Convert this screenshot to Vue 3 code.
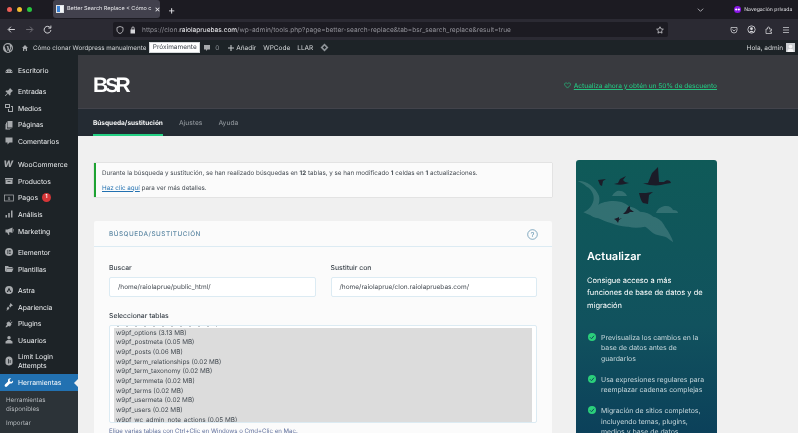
<script setup>
const menuGroups = [
  [{ label: 'Escritorio', icon: 'M3 15a7 7 0 1 1 14 0l-1 1H4zM10 7a1 1 0 1 0 0 2 1 1 0 0 0 0-2zM5 12a1 1 0 1 0 0 2 1 1 0 0 0 0-2zM15 12a1 1 0 1 0 0 2 1 1 0 0 0 0-2zM10 10l-1 4h2z' }],
  [
    { label: 'Entradas', icon: 'M12 2l6 6-2 1-3 3v4l-2 1-3-4-5 5H2v-1l5-5-4-3 1-2h4l3-3z' },
    { label: 'Medios', icon: 'M2 2h10v8H2zM4 4v4h6V4zM14 6h4v12H8v-6h2v4h6V8h-2z' },
    { label: 'Páginas', icon: 'M7 2h10v13H7zM4 5h2v12h9v1H4zM2 8h1v11h9v-1H2z' },
    { label: 'Comentarios', icon: 'M3 3h14v10h-6l-4 4v-4H3z' },
  ],
  [
    { label: 'WooCommerce', glyph: 'W' },
    { label: 'Productos', icon: 'M2 4h16v3H2zM3 8h14v8H3zM7 10v1.5h6V10z' },
    { label: 'Pagos', money: true, badge: 1 },
    { label: 'Análisis', icon: 'M3 12h3v5H3zM8.5 8h3v9h-3zM14 3h3v14h-3z' },
    { label: 'Marketing', icon: 'M17 3v11l-6-2v1l-1 1 1 3-2 1-2-4-1-1H3V7h4zM18 6h1v5h-1z' },
  ],
  [
    { label: 'Elementor', icon: 'M10 2a8 8 0 1 0 0 16 8 8 0 0 0 0-16zM7 6h1.500v8H7zM10 6h3.500v1.500H10zM10 9.200h3.500v1.500H10zM10 12.500h3.500V14H10z', evenodd: true },
    { label: 'Plantillas', icon: 'M2 4h6l2 2h7v2H6l-2 7H2zM6 9h13l-3 7H4z' },
  ],
  [
    { label: 'Astra', icon: 'M10 2a8 8 0 1 0 0 16 8 8 0 0 0 0-16zM10 5l4.500 9H12l-2-4.500L8 14H5.500z', evenodd: true },
    { label: 'Apariencia', icon: 'M13 2l5 5-3 1-2 3-3-3 2-3zM8 9l3 3-2 3-5 3 1-1 2-3-2 1 1-3z' },
    { label: 'Plugins', icon: 'M13 2l1 1-3 3 2 2 3-3 1 1-3 3 1 2-3 4-3-1-5 3-1-1 3-5-1-3 4-3 2 1z' },
    { label: 'Usuarios', icon: 'M10 2a3.500 3.500 0 1 1 0 7 3.500 3.500 0 0 1 0-7zM7 10h6l4 3v4H3v-4z' },
    { label: 'Limit Login Attempts', tall: true, icon: 'M10 1c4 0 7 3 7 7v6c0 3-3 5-7 5-4 0-7-2-7-5V8c0-4 3-7 7-7zM8 6v9h1.500V6zM11.500 8v6H13V8z', evenodd: true },
  ],
]

const tablas = [
  'w9pf_options (3.13 MB)',
  'w9pf_postmeta (0.05 MB)',
  'w9pf_posts (0.06 MB)',
  'w9pf_term_relationships (0.02 MB)',
  'w9pf_term_taxonomy (0.02 MB)',
  'w9pf_termmeta (0.02 MB)',
  'w9pf_terms (0.02 MB)',
  'w9pf_usermeta (0.02 MB)',
  'w9pf_users (0.02 MB)',
  'w9pf_wc_admin_note_actions (0.05 MB)',
]

const ventajas = [
  'Previsualiza los cambios en la base de datos antes de guardarlos',
  'Usa expresiones regulares para reemplazar cadenas complejas',
  'Migración de sitios completos, incluyendo temas, plugins, medios y base de datos',
]
</script>

<template>
  <div class="ventana">
    <!-- pestañas del navegador -->
    <div class="tabbar">
      <div class="semaforo">
        <span class="luz rojo"></span>
        <span class="luz ambar"></span>
        <span class="luz verde"></span>
      </div>
      <div class="tab">
        <span class="favicon"></span>
        <span class="tab-titulo">Better Search Replace &lt; Cómo c</span>
        <span class="tab-x">×</span>
      </div>
      <span class="tab-mas">+</span>
      <svg class="chevron" viewBox="0 0 10 6" width="7" height="4">
        <path d="M1 1l4 4 4-4" fill="none" stroke="#c9c9cf" stroke-width="1.200" />
      </svg>
      <div class="privado">
        <svg viewBox="0 0 16 16" width="7" height="7">
          <circle cx="8" cy="8" r="8" fill="#8a16e8" />
          <circle cx="5" cy="8" r="2.500" fill="#fff" />
          <circle cx="11" cy="8" r="2.500" fill="#fff" />
        </svg>
        <span>Navegación privada</span>
      </div>
    </div>

    <!-- barra de direcciones -->
    <div class="toolbar">
      <div class="nav-botones">
        <svg viewBox="0 0 16 16" width="9" height="9"><path d="M14 8H3M7 3L2 8l5 5" fill="none" stroke="#e4e4e8" stroke-width="1.600" /></svg>
        <svg viewBox="0 0 16 16" width="9" height="9"><path d="M2 8h11M9 3l5 5-5 5" fill="none" stroke="#77767d" stroke-width="1.600" /></svg>
        <svg viewBox="0 0 16 16" width="9" height="9"><path d="M13 5a6 6 0 1 0 1 4M14 1v4.500H9.500" fill="none" stroke="#e4e4e8" stroke-width="1.600" /></svg>
      </div>
      <div class="url">
        <svg viewBox="0 0 16 16" width="8" height="8"><path d="M8 1l6 2v5c0 4-3 6-6 7-3-1-6-3-6-7V3z" fill="none" stroke="#d6d6da" stroke-width="1.500" /></svg>
        <svg viewBox="0 0 16 16" width="8" height="8"><path d="M5 7V4a3 3 0 0 1 6 0v3h1v8H3V7zM6.500 7h3V4a1.500 1.500 0 0 0-3 0z" fill="#d6d6da" fill-rule="evenodd" /></svg>
        <span class="url-texto">https://clon.<b>raiolapruebas.com</b>/wp-admin/tools.php?page=better-search-replace&amp;tab=bsr_search_replace&amp;result=true</span>
        <svg class="estrella" viewBox="0 0 16 16" width="8" height="8"><path d="M8 1.500l2 4.300 4.700.6-3.500 3.200.9 4.700L8 12l-4.100 2.300.9-4.700L1.300 6.400 6 5.800z" fill="none" stroke="#e4e4e8" stroke-width="1.400" /></svg>
      </div>
      <div class="tool-iconos">
        <svg viewBox="0 0 16 16" width="8" height="8"><path d="M2 3h12v5a6 6 0 0 1-12 0zM5 7l3 3 3-3" fill="none" stroke="#d6d6da" stroke-width="1.500" /></svg>
        <svg viewBox="0 0 16 16" width="9" height="9"><circle cx="8" cy="8" r="6.500" fill="none" stroke="#d6d6da" stroke-width="1.500" /><circle cx="8" cy="6.500" r="2.500" fill="#d6d6da" /><path d="M3.500 13a5 5 0 0 1 9 0z" fill="#d6d6da" /></svg>
        <svg viewBox="0 0 16 16" width="8" height="8"><path d="M2 6h3V4a2 2 0 0 1 4 0v2h4v3h-1.500a1.500 1.500 0 0 0 0 3H13v3H2z" fill="none" stroke="#d6d6da" stroke-width="1.500" /></svg>
        <svg viewBox="0 0 16 16" width="8" height="8"><path d="M2 3h12M2 8h12M2 13h12" stroke="#a8a8ae" stroke-width="2" /></svg>
      </div>
    </div>

    <!-- barra de administración -->
    <div class="adminbar">
      <svg class="wp-logo" viewBox="0 0 20 20" width="10" height="10">
        <path fill-rule="evenodd" d="M10 0a10 10 0 1 0 0 20 10 10 0 0 0 0-20zM3 6l4 11 2-6-1.500-4.500-1-.1V6h5v.4l-1 .1L13 14l1.200-3.800c.5-1.700 0-3-.8-4.300-.3-.6 0-1.500 1-1.800A8 8 0 0 0 3 6zM10 12l-2 6a8 8 0 0 0 4.300-.2zM16.500 6c.3 2 0 3.500-.6 5L14 16.500A8 8 0 0 0 16.500 6z" fill="#a7aaad" />
      </svg>
      <svg viewBox="0 0 16 16" width="8" height="8"><path d="M8 2l6 6h-2v6H9.500v-4h-3v4H4V8H2z" fill="#a7aaad" /></svg>
      <span class="site">Cómo clonar Wordpress manualmente</span>
      <span class="proximamente">Próximamente</span>
      <svg class="ab-com" viewBox="0 0 16 16" width="8" height="8"><path d="M2 2h12v9H9l-3 3v-3H2z" fill="#a7aaad" /></svg>
      <span class="ab-cero">0</span>
      <svg class="ab-mas" viewBox="0 0 10 10" width="6" height="6"><path d="M5 0v10M0 5h10" stroke="#c3c6c9" stroke-width="1.800" /></svg>
      <span class="ab-link">Añadir</span>
      <span class="ab-link">WPCode</span>
      <span class="ab-link">LLAR</span>
      <svg class="ab-diamante" viewBox="0 0 16 16" width="9" height="9"><path d="M8 1l7 7-7 7-7-7zM8 5L5 8l3 3 3-3z" fill="#8f9499" fill-rule="evenodd" /></svg>
      <span class="hola">Hola, admin</span>
      <span class="avatar"><svg viewBox="0 0 10 10" width="9" height="9"><rect width="10" height="10" fill="#c9cdd0" /><circle cx="5" cy="4" r="2" fill="#f5f5f5" /><path d="M1.500 10a3.500 3.500 0 0 1 7 0z" fill="#f5f5f5" /></svg></span>
    </div>

    <div class="cuerpo">
      <!-- menú lateral -->
      <aside class="sidebar">
        <div v-for="(grupo, g) in menuGroups" :key="g" class="grupo">
          <div v-for="item in grupo" :key="item.label" class="item" :class="{ tall: item.tall }">
            <span class="ico">
              <span v-if="item.glyph" class="ico-glifo">{{ item.glyph }}</span>
              <svg v-else-if="item.money" viewBox="0 0 20 20" width="10" height="10">
                <rect x="1" y="4" width="18" height="12" fill="none" stroke="#a7aaad" stroke-width="1.500" />
                <text x="10" y="14" font-size="9" text-anchor="middle" fill="#a7aaad" font-family="Liberation Sans, sans-serif">$</text>
              </svg>
              <svg v-else viewBox="0 0 20 20" width="10" height="10">
                <path :d="item.icon" fill="#a7aaad" :fill-rule="item.evenodd ? 'evenodd' : 'nonzero'" />
              </svg>
            </span>
            <span class="item-texto">{{ item.label }}</span>
            <span v-if="item.badge" class="badge">{{ item.badge }}</span>
          </div>
        </div>
        <div class="item activo">
          <span class="ico">
            <svg viewBox="0 0 20 20" width="10" height="10"><path d="M18 5l-3 3-3-1-1-3 3-3c-3-1-6 1-6 4v2L2 13c-1 1-1 3 0 4s3 1 4 0l6-6h2c3 0 5-3 4-6z" fill="#fff" /></svg>
          </span>
          <span class="item-texto">Herramientas</span>
          <span class="flecha"></span>
        </div>
        <div class="submenu">
          <div>Herramientas disponibles</div>
          <div>Importar</div>
        </div>
      </aside>

      <div class="pagina">
        <header class="bsr-cabecera">
          <span class="bsr-logo">B<span class="bsr-s">S</span>R</span>
          <div class="promo">
            <svg viewBox="0 0 16 16" width="7" height="7"><path d="M8 14L2 7.500C0 5 2 2 4.500 2 6 2 7.300 3 8 4c.7-1 2-2 3.500-2C14 2 16 5 14 7.500z" fill="none" stroke="#25c07f" stroke-width="1.600" /></svg>
            <a>Actualiza ahora y obtén un 50% de descuento</a>
          </div>
        </header>
        <nav class="bsr-tabs">
          <span class="bsr-tab activa">Búsqueda/sustitución</span>
          <span class="bsr-tab">Ajustes</span>
          <span class="bsr-tab">Ayuda</span>
        </nav>

        <div class="contenido">
          <main class="columna">
            <div class="aviso">
              <p>Durante la búsqueda y sustitución, se han realizado búsquedas en <b>12</b> tablas, y se han modificado <b>1</b> celdas en <b>1</b> actualizaciones.</p>
              <p><a>Haz clic aquí</a> para ver más detalles.</p>
            </div>

            <section class="tarjeta">
              <div class="tarjeta-cab">
                <h3>Búsqueda/sustitución</h3>
                <svg viewBox="0 0 16 16" width="11" height="11">
                  <circle cx="8" cy="8" r="7" fill="none" stroke="#4f86a6" stroke-width="1" />
                  <text x="8" y="11.500" font-size="10" text-anchor="middle" fill="#4f86a6" font-family="Liberation Sans, sans-serif">?</text>
                </svg>
              </div>
              <div class="tarjeta-cuerpo">
                <div class="campos">
                  <label class="campo">
                    <span>Buscar</span>
                    <div class="entrada">/home/raiolaprue/public_html/</div>
                  </label>
                  <label class="campo">
                    <span>Sustituir con</span>
                    <div class="entrada">/home/raiolaprue/clon.raiolapruebas.com/</div>
                  </label>
                </div>
                <div class="tablas">
                  <span class="tablas-titulo">Seleccionar tablas</span>
                  <div class="lista">
                    <!-- la fila anterior, desplazada: solo asoman los bajos de las letras -->
                    <div class="fila-oculta"></div>
                    <div class="seleccion">
                      <div v-for="t in tablas" :key="t" class="fila">{{ t }}</div>
                    </div>
                  </div>
                  <p class="ayuda">Elige varias tablas con Ctrl+Clic en Windows o Cmd+Clic en Mac.</p>
                </div>
              </div>
            </section>
          </main>

          <aside class="upgrade">
            <svg class="ilustracion" viewBox="0 0 141 85" width="141" height="85">
              <g fill="#fff" fill-opacity="0.15">
                <path d="M1.700 21C9 20 19 26 23 36C24 40 23 43 22.300 45C26 42 36 40 44 41.700C50 43 52 46 54 46.700C58 47 62 50 64 51.700C70 52 74 54 77.300 56.700C83 58 87 62 89 66.700C93 72 96 78 97.300 82.300C94 80 92 78 89 76.700C85 76 80 75 77.300 73.300C74 71 72 68 69 66.700C63 68 57 68 52.300 66.700C46 67 40 65 35.700 63.300C31 62 26 60 22.300 58.300C18 58 16 56 14 55C11 54 9 53 7.300 52.300C11 51 14 48 15.700 45C18 41 18 38 17.300 35C16 31 14 28 10.700 26.700C8 24 4 22 1.700 21Z" />
                <path d="M36 36C38 32 42 30 44 31C47 31 50 33 51 36Z" />
                <path d="M80 53C82 48 86 46 90 46C94 46 96 48 97 50C100 50 102 51 102 53Z" />
              </g>
              <g fill="#1b1c28">
                <path d="M67 23.500L72 23L76 13L82 7L83 22L88 22C90 20 92 20 94 21L95 23L89 24C84 26 75 26 67 23.500Z" />
                <path d="M38 24L42 23L44 19L50 16L47 20L49 22L53 23L49 24C46 25 42 25 38 24Z" />
                <path d="M22 20L30 19L27 21L26 26L24 25Z" />
                <path d="M63 33L70 33C72 33 74 32 77 32L73 35L72 44L67 43C65 41 64 37 63 33Z" />
                <path d="M47 54L50 51L52 47L54 46L54 49L58 52L54 52C52 54 50 54 47 54Z" />
                <path d="M38 59L41 58L43 57L43 59L46 58L43 60L42 63C41 61 40 60 38 59Z" />
              </g>
            </svg>
            <div class="upgrade-texto">
              <h2>Actualizar</h2>
              <p class="upgrade-intro">Consigue acceso a más funciones de base de datos y de migración</p>
              <ul>
                <li v-for="v in ventajas" :key="v">
                  <svg viewBox="0 0 16 16" width="8" height="8">
                    <circle cx="8" cy="8" r="8" fill="#2bd07b" />
                    <path d="M4 8.500l3 3 5-6" fill="none" stroke="#0f4f5c" stroke-width="2" />
                  </svg>
                  <span>{{ v }}</span>
                </li>
              </ul>
            </div>
          </aside>
        </div>
      </div>
    </div>
  </div>
</template>

<style>
html,
body {
  margin: 0;
  overflow: hidden;
}
</style>

<style scoped>
.ventana {
  width: 798px;
  height: 433px;
  overflow: hidden;
  display: flex;
  flex-direction: column;
  font-family: Inter, 'Liberation Sans', sans-serif;
  text-rendering: geometricPrecision;
  background: #f0f0f0;
  filter: blur(0.3px);
}

.tabbar {
  height: 19px;
  flex: none;
  display: flex;
  align-items: center;
  background: #1c1b22;
  color: #e6e6ea;
}

.semaforo {
  width: 53px;
  padding-left: 7px;
  box-sizing: border-box;
  display: flex;
  gap: 5px;
}

.luz {
  width: 5px;
  height: 5px;
  border-radius: 50%;
}

.rojo {
  background: #ee5f57;
}

.ambar {
  background: #f4bd2f;
}

.verde {
  background: #27c63f;
}

.tab {
  width: 107px;
  height: 18px;
  align-self: flex-start;
  box-sizing: border-box;
  padding: 0 5px 0 3px;
  display: flex;
  align-items: center;
  gap: 3px;
  background: #42414d;
  border-radius: 3px;
  font-size: 5.500px;
}

.favicon {
  width: 8px;
  height: 8px;
  flex: none;
  background: linear-gradient(90deg, #3b82d6 50%, #f4f6f8 50%);
  border: 1px solid #dfe3e6;
  box-sizing: border-box;
}

.tab-titulo {
  flex: 1;
  white-space: nowrap;
}

.tab-x {
  font-size: 9px;
}

.tab-mas {
  margin-left: 8px;
  font-size: 11px;
}

.chevron {
  margin-left: 522px;
}

.privado {
  margin-left: 30px;
  display: flex;
  align-items: center;
  gap: 3px;
  font-size: 5.100px;
  white-space: nowrap;
}

.toolbar {
  height: 21px;
  flex: none;
  display: flex;
  align-items: center;
  background: #2b2a33;
}

.nav-botones {
  width: 113px;
  box-sizing: border-box;
  padding-left: 7px;
  display: flex;
  gap: 9px;
}

.url {
  width: 555px;
  height: 15px;
  box-sizing: border-box;
  padding: 0 4px 0 3px;
  display: flex;
  align-items: center;
  gap: 5px;
  background: #1c1b22;
  border-radius: 2px;
  font-size: 6.580px;
  color: #8f8f96;
}

.url-texto {
  flex: 1;
  white-space: nowrap;
}

.url-texto b {
  color: #f0f0f4;
  font-weight: 400;
}

.tool-iconos {
  margin-left: 62px;
  display: flex;
  align-items: center;
  gap: 9px;
}

.adminbar {
  height: 15px;
  flex: none;
  display: flex;
  align-items: center;
  padding: 0 3px 0 3px;
  background: #1d2327;
  color: #d5d8da;
  font-size: 6.500px;
  white-space: nowrap;
}

.wp-logo {
  margin-right: 8px;
}

.site {
  margin-left: 4px;
  font-size: 6.280px;
}

.proximamente {
  margin-left: 3px;
  padding: 1px 2.500px;
  background: #fff;
  border: 1px solid #d5d8da;
  color: #3c434a;
  line-height: 7px;
}

.ab-com {
  margin-left: 3px;
}

.ab-cero {
  margin-left: 4px;
  color: #8f9499;
}

.ab-mas {
  margin-left: 9px;
}

.ab-link {
  margin-left: 2px;
  margin-right: 5px;
}

.ab-diamante {
  margin-left: 2px;
}

.hola {
  margin-left: auto;
}

.avatar {
  margin-left: 3px;
  display: flex;
}

.cuerpo {
  flex: 1;
  min-height: 0;
  display: flex;
}

.sidebar {
  width: 78px;
  flex: none;
  padding-top: 7px;
  background: #1d2327;
  color: #eceef0;
  font-size: 6.800px;
}

.grupo {
  margin-bottom: 4.800px;
}

.grupo:nth-child(2) {
  margin-bottom: 6.600px;
}

.item {
  height: 16.600px;
  display: flex;
  align-items: center;
  position: relative;
}

.item.tall {
  height: 25.600px;
  line-height: 9.500px;
}

.ico {
  width: 18px;
  flex: none;
  box-sizing: border-box;
  padding-left: 3.500px;
  display: flex;
  align-items: center;
}

.ico-glifo {
  width: 10px;
  font-size: 9px;
  font-weight: 800;
  font-style: italic;
  color: #a7aaad;
}

.badge {
  width: 9px;
  height: 9px;
  margin-left: 4px;
  border-radius: 50%;
  background: #d63638;
  color: #fff;
  font-size: 5.500px;
  font-weight: 600;
  text-align: center;
  line-height: 9px;
}

.activo {
  height: 17px;
  background: #2271b1;
  color: #fff;
  margin-top: -4.800px;
}

.flecha {
  position: absolute;
  right: 0;
  top: 4.500px;
  border: 4px solid transparent;
  border-right-color: #f0f0f0;
  border-left-width: 0;
}

.submenu {
  padding: 5px 6px;
  background: #2c3338;
  color: #b9bdc1;
  font-size: 6.200px;
  line-height: 9px;
}

.submenu div + div {
  margin-top: 5px;
}

.pagina {
  flex: 1;
  min-width: 0;
  display: flex;
  flex-direction: column;
}

.bsr-cabecera {
  height: 54px;
  flex: none;
  box-sizing: border-box;
  padding: 8px 81px 0 15px;
  display: flex;
  align-items: center;
  justify-content: space-between;
  background: #393a3f;
  border-bottom: 1px solid #42434b;
}

.bsr-logo {
  font-family: 'Liberation Sans', sans-serif;
  font-size: 21px;
  font-weight: 700;
  letter-spacing: -3px;
  color: #fff;
}

.bsr-s {
  font-size: 20px;
}

.promo {
  display: flex;
  align-items: center;
  gap: 3px;
  font-size: 6.500px;
  font-weight: 500;
  color: #25c07f;
}

.promo a {
  text-decoration: underline;
}

.bsr-tabs {
  height: 27px;
  flex: none;
  box-sizing: border-box;
  padding-left: 15px;
  display: flex;
  gap: 16px;
  background: #242b33;
}

.bsr-tab {
  line-height: 28px;
  font-size: 6.600px;
  font-weight: 500;
  color: #8b9197;
}

.bsr-tab.activa {
  height: 27px;
  box-sizing: border-box;
  border-bottom: 2px solid #25d084;
  font-size: 6.500px;
  font-weight: 700;
  color: #f4f5f6;
}

.contenido {
  flex: 1;
  min-height: 0;
  display: flex;
  gap: 24px;
  padding: 24px 0 0 16px;
}

.columna {
  width: 458px;
  flex: none;
  margin-top: 3px;
}

.aviso {
  height: 34px;
  box-sizing: border-box;
  padding: 6px 6px;
  background: #fbfbfb;
  border-left: 2px solid #1ea332;
  box-shadow: 0 0 1px rgba(0, 0, 0, 0.3);
  font-size: 6.250px;
  line-height: 9px;
  color: #444b52;
}

.aviso p {
  margin: 0 0 5.500px;
}

.aviso a {
  color: #2271b1;
  text-decoration: underline;
}

.tarjeta {
  margin-top: 24px;
  background: #fbfbfb;
  border-radius: 2px;
}

.tarjeta-cab {
  height: 26px;
  box-sizing: border-box;
  padding: 1px 14px 0 15px;
  display: flex;
  align-items: center;
  justify-content: space-between;
  border-bottom: 1px solid #dcebf3;
}

.tarjeta-cab h3 {
  margin: 0;
  font-size: 6.400px;
  font-weight: 500;
  letter-spacing: 0.500px;
  text-transform: uppercase;
  color: #5d88a4;
}

.tarjeta-cuerpo {
  padding: 16px 15px 0;
}

.campos {
  display: grid;
  grid-template-columns: 1fr 1fr;
  gap: 15px;
}

.campo {
  display: block;
}

.campo span,
.tablas-titulo {
  display: block;
  font-size: 6.800px;
  font-weight: 500;
  line-height: 10px;
  margin-bottom: 4px;
  color: #3c444c;
}

.entrada {
  height: 20px;
  box-sizing: border-box;
  padding-left: 8px;
  border: 1px solid #dcebf3;
  border-radius: 2px;
  background: #fff;
  font-size: 6.500px;
  line-height: 19px;
  color: #444b52;
}

.tablas {
  margin-top: 14px;
}

.lista {
  height: 98px;
  box-sizing: border-box;
  padding: 0 4px;
  border: 1px solid #dcebf3;
  border-radius: 2px;
  background: #fff;
  overflow: hidden;
  font-size: 6.400px;
  line-height: 9.670px;
  color: #444b52;
}

.fila-oculta {
  width: 100px;
  height: 1px;
  margin: 0 0 1px 3px;
  background: repeating-linear-gradient(90deg, #c4c7ca 0 2px, transparent 2px 9px);
}

.seleccion {
  background: #dcdcdc;
  padding-top: 0.500px;
}

.fila {
  padding-left: 2px;
  white-space: nowrap;
}

.ayuda {
  margin: 5px 0 0;
  font-size: 6.100px;
  color: #5f6f9c;
}

.upgrade {
  width: 141px;
  height: 300px;
  flex: none;
  border-radius: 3px;
  color: #fff;
  background: linear-gradient(180deg, #0f5a58 0%, #11525e 55%, #0a3c59 100%);
}

.ilustracion {
  display: block;
}

.upgrade-texto {
  padding: 3px 9px 0 11px;
}

.upgrade h2 {
  margin: 0;
  font-size: 11px;
  line-height: 16px;
  font-weight: 600;
}

.upgrade-intro {
  margin: 10.500px 0 0;
  font-size: 7.500px;
  line-height: 12.700px;
}

.upgrade ul {
  margin: 20px 0 0;
  padding: 0 0 0 1px;
  list-style: none;
}

.upgrade li {
  display: flex;
  gap: 5px;
  margin-bottom: 10.500px;
  font-size: 6.900px;
  line-height: 10.500px;
  color: #c6d7dc;
}

.upgrade li svg {
  flex: none;
}
</style>
